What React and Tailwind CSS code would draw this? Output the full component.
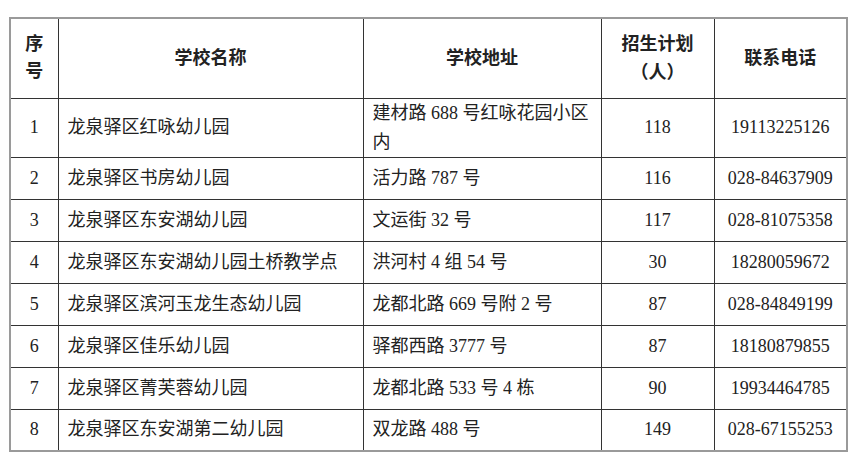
const ROWS = [
  { no: '1', name: '龙泉驿区红咏幼儿园', addr: '建材路 688 号红咏花园小区内', plan: '118', tel: '19113225126', tall: true },
  { no: '2', name: '龙泉驿区书房幼儿园', addr: '活力路 787 号', plan: '116', tel: '028-84637909' },
  { no: '3', name: '龙泉驿区东安湖幼儿园', addr: '文运街 32 号', plan: '117', tel: '028-81075358' },
  { no: '4', name: '龙泉驿区东安湖幼儿园土桥教学点', addr: '洪河村 4 组 54 号', plan: '30', tel: '18280059672' },
  { no: '5', name: '龙泉驿区滨河玉龙生态幼儿园', addr: '龙都北路 669 号附 2 号', plan: '87', tel: '028-84849199' },
  { no: '6', name: '龙泉驿区佳乐幼儿园', addr: '驿都西路 3777 号', plan: '87', tel: '18180879855' },
  { no: '7', name: '龙泉驿区菁芙蓉幼儿园', addr: '龙都北路 533 号 4 栋', plan: '90', tel: '19934464785' },
  { no: '8', name: '龙泉驿区东安湖第二幼儿园', addr: '双龙路 488 号', plan: '149', tel: '028-67155253' },
];

export default function App() {
  return (
    <div
      className="h-[475px] w-[854px] bg-white pl-[9px] pt-[17px] text-[#222]"
      style={{ fontFamily: '"Liberation Serif", "Noto Sans CJK SC", serif' }}
    >
      <table className="w-[837px] table-fixed border-collapse border-2 border-[#9a9a9a] text-[18px]">
        <colgroup>
          <col className="w-[48px]" />
          <col className="w-[305px]" />
          <col className="w-[238px]" />
          <col className="w-[113px]" />
          <col className="w-[133px]" />
        </colgroup>
        <thead>
          <tr className="h-[80px] font-bold">
            <th className="border border-[#333] border-l-[#9a9a9a] px-1 text-center leading-[27px]">序<br />号</th>
            <th className="border border-[#333] text-center">学校名称</th>
            <th className="border border-[#333] text-center">学校地址</th>
            <th className="border border-[#333] text-center leading-[28px]">招生计划<br />（人）</th>
            <th className="border border-[#333] border-r-[#9a9a9a] text-center">联系电话</th>
          </tr>
        </thead>
        <tbody>
          {ROWS.map((r) => (
            <tr key={r.no} className={r.tall ? 'h-[58px]' : 'h-[42px]'}>
              <td className="border border-[#333] border-l-[#9a9a9a] text-center">{r.no}</td>
              <td className="border border-[#333] pl-[9px] whitespace-nowrap">{r.name}</td>
              <td className="border border-[#333] pl-[9px] pr-2 leading-[29px]">{r.addr}</td>
              <td className="border border-[#333] text-center">{r.plan}</td>
              <td className="border border-[#333] border-r-[#9a9a9a] text-center">{r.tel}</td>
            </tr>
          ))}
        </tbody>
      </table>
    </div>
  );
}
